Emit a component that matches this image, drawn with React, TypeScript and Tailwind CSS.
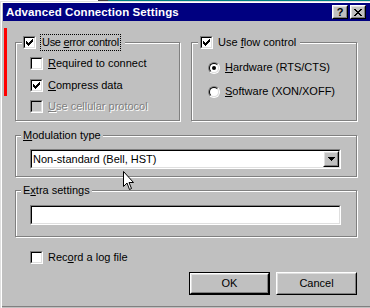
import type { ReactNode } from "react"
import clsx from "clsx"

function CheckMark({ dim }: { dim?: boolean }) {
	return (
		<svg width="7" height="7" viewBox="0 0 7 7" shapeRendering="crispEdges" className="block">
			<g fill={dim ? "#808080" : "#000"}>
				<rect x="6" y="0" width="1" height="1" />
				<rect x="5" y="1" width="2" height="1" />
				<rect x="0" y="2" width="1" height="1" />
				<rect x="4" y="2" width="3" height="1" />
				<rect x="0" y="3" width="2" height="1" />
				<rect x="3" y="3" width="3" height="1" />
				<rect x="0" y="4" width="5" height="1" />
				<rect x="1" y="5" width="3" height="1" />
				<rect x="2" y="6" width="1" height="1" />
			</g>
		</svg>
	)
}

function Checkbox({ checked, disabled }: { checked?: boolean; disabled?: boolean }) {
	return (
		<div className="w-[13px] h-[13px] shrink-0 border border-t-[#808080] border-l-[#808080] border-b-white border-r-white">
			<div
				className={clsx(
					"w-full h-full flex items-center justify-center border border-t-black border-l-black border-b-[#dfdfdf] border-r-[#dfdfdf]",
					disabled ? "bg-[#c0c0c0]" : "bg-white",
				)}
			>
				{checked && <CheckMark />}
			</div>
		</div>
	)
}

function Radio({ checked }: { checked?: boolean }) {
	return (
		<div className="w-[12px] h-[12px] shrink-0 rounded-full border border-t-[#808080] border-l-[#808080] border-b-white border-r-white">
			<div className="w-full h-full rounded-full flex items-center justify-center bg-white border border-t-black border-l-black border-b-[#dfdfdf] border-r-[#dfdfdf]">
				{checked && <div className="w-[4px] h-[4px] rounded-full bg-black" />}
			</div>
		</div>
	)
}

function Group({
	className,
	legend,
	legendClass,
	children,
}: {
	className?: string
	legend: ReactNode
	legendClass?: string
	children?: ReactNode
}) {
	return (
		<div className={clsx("relative border border-[#808080] shadow-[inset_1px_1px_0_#fff,1px_1px_0_#fff]", className)}>
			<div className={clsx("absolute top-[-7px] h-[13px] flex items-center bg-[#c0c0c0]", legendClass)}>{legend}</div>
			{children}
		</div>
	)
}

function Sunken({ className, children }: { className?: string; children?: ReactNode }) {
	return (
		<div className={clsx("border border-t-[#808080] border-l-[#808080] border-b-white border-r-white", className)}>
			<div className="w-full h-full flex items-center bg-white border border-t-black border-l-black border-b-[#dfdfdf] border-r-[#dfdfdf]">
				{children}
			</div>
		</div>
	)
}

function Raised({ className, children }: { className?: string; children?: ReactNode }) {
	return (
		<div className={clsx("border border-t-white border-l-white border-b-black border-r-black", className)}>
			<div className="w-full h-full flex items-center justify-center bg-[#c0c0c0] border border-t-[#dfdfdf] border-l-[#dfdfdf] border-b-[#808080] border-r-[#808080]">
				{children}
			</div>
		</div>
	)
}

function Row({ children, className }: { children: ReactNode; className?: string }) {
	return <div className={clsx("flex items-center h-[13px]", className)}>{children}</div>
}

export default function App() {
	return (
		<div className="w-[370px] h-[308px] bg-[#c0c0c0] relative overflow-hidden font-['Liberation_Sans',Arial,sans-serif] text-[11px] leading-[13px] text-black">
			{/* what peeks out behind the dialog */}
			<div className="flex h-px">
				<div className="w-[98px] bg-white" />
				<div className="w-[10px] bg-[#404040]" />
				<div className="flex-1 bg-[#008080]" />
			</div>
			<div className="h-px bg-[#dfdfdf]" />

			<div className="h-[306px] pt-px shadow-[inset_1px_0_0_#dfdfdf,inset_2px_0_0_#fff,inset_0_1px_0_#fff,inset_0_-1px_0_#c0c0c0,inset_0_-2px_0_#808080]">
				{/* title bar */}
				<div className="ml-[3px] h-[18px] bg-[#000080] flex items-center pl-[3px] pr-[4px]">
					<span className="text-white font-bold text-[11.5px] tracking-[0.1px]">Advanced Connection Settings</span>
					<div className="ml-auto flex gap-[2px]">
						<Raised className="w-[16px] h-[14px]">
							<span className="font-bold text-[11px] leading-[10px]">?</span>
						</Raised>
						<Raised className="w-[16px] h-[14px]">
							<svg width="8" height="7" viewBox="0 0 8 7" shapeRendering="crispEdges">
								<path d="M0 0h2v1h-2zM6 0h2v1h-2zM1 1h2v1h-2zM5 1h2v1h-2zM2 2h4v1h-4zM3 3h2v1h-2zM2 4h4v1h-4zM1 5h2v1h-2zM5 5h2v1h-2zM0 6h2v1h-2zM6 6h2v1h-2z" fill="#000" />
							</svg>
						</Raised>
					</div>
				</div>

				{/* body */}
				<div className="pl-[15px]">
					<div className="mt-[21px] flex gap-[11px]">
						<Group
							className="w-[165px] h-[79px]"
							legendClass="left-[6px] pl-px pr-[4px]"
							legend={
								<>
									<Checkbox checked />
									<div className="ml-[4px] h-[17px] flex items-center border border-dotted border-black px-px">
										<span className="tracking-[-0.3px]">
											Use <u>e</u>rror control
										</span>
									</div>
								</>
							}
						>
							<div className="pl-[14px] pt-[14px] flex flex-col">
								<Row>
									<Checkbox />
									<span className="ml-[5px]">
										<u>R</u>equired to connect
									</span>
								</Row>
								<Row className="mt-[9px]">
									<Checkbox checked />
									<span className="ml-[5px]">
										<u>C</u>ompress data
									</span>
								</Row>
								<Row className="mt-[8px]">
									<Checkbox disabled />
									<span className="ml-[5px] text-[#808080] [text-shadow:1px_1px_0_#fff]">
										<u>U</u>se cellular protocol
									</span>
								</Row>
							</div>
						</Group>

						<Group
							className="w-[166px] h-[79px]"
							legendClass="left-[6px] pl-[2px] pr-[4px]"
							legend={
								<>
									<Checkbox checked />
									<span className="ml-[5px]">
										Use <u>f</u>low control
									</span>
								</>
							}
						>
							<div className="pl-[16px] pt-[18px] flex flex-col">
								<Row>
									<Radio checked />
									<span className="ml-[5px]">
										<u>H</u>ardware (RTS/CTS)
									</span>
								</Row>
								<Row className="mt-[11px]">
									<Radio />
									<span className="ml-[5px]">
										<u>S</u>oftware (XON/XOFF)
									</span>
								</Row>
							</div>
						</Group>
					</div>

					<Group
						className="mt-[14px] w-[342px] h-[42px]"
						legendClass="left-[5px] px-[2px]"
						legend={
							<span>
								<u>M</u>odulation type
							</span>
						}
					>
						<Sunken className="mt-[13px] ml-[14px] w-[311px] h-[20px]">
							<span className="pl-[1px] flex-1">Non-standard (Bell, HST)</span>
							<Raised className="w-[16px] h-[16px]">
								<svg width="7" height="4" viewBox="0 0 7 4" shapeRendering="crispEdges">
									<path d="M0 0h7v1h-7zM1 1h5v1h-5zM2 2h3v1h-3zM3 3h1v1h-1z" fill="#000" />
								</svg>
							</Raised>
						</Sunken>
					</Group>

					<Group
						className="mt-[13px] w-[342px] h-[47px]"
						legendClass="left-[5px] px-[2px]"
						legend={
							<span>
								E<u>x</u>tra settings
							</span>
						}
					>
						<Sunken className="mt-[14px] ml-[14px] w-[311px] h-[20px]" />
					</Group>

					<Row className="mt-[14px] pl-[15px]">
						<Checkbox />
						<span className="ml-[5px]">
							Rec<u>o</u>rd a log file
						</span>
					</Row>

					<div className="mt-[8px] w-[342px] flex justify-end gap-[6px]">
						<div className="w-[81px] h-[23px] border border-black">
							<Raised className="w-full h-full">OK</Raised>
						</div>
						<Raised className="w-[81px] h-[23px]">Cancel</Raised>
					</div>
				</div>
			</div>

			{/* annotation mark and mouse pointer over the dialog */}
			<div className="absolute left-[4px] top-[28px] w-[3px] h-[68px] bg-[#ff0000]" />
			<svg className="absolute left-[123px] top-[171px]" width="13" height="20" viewBox="0 0 13 20">
				<path d="M0.5 0.5V15.5L4 12L6.5 18.5L8.5 17.5L6 11.5H10.5Z" fill="#fff" stroke="#000" strokeWidth="1" strokeLinejoin="miter" />
			</svg>
		</div>
	)
}
